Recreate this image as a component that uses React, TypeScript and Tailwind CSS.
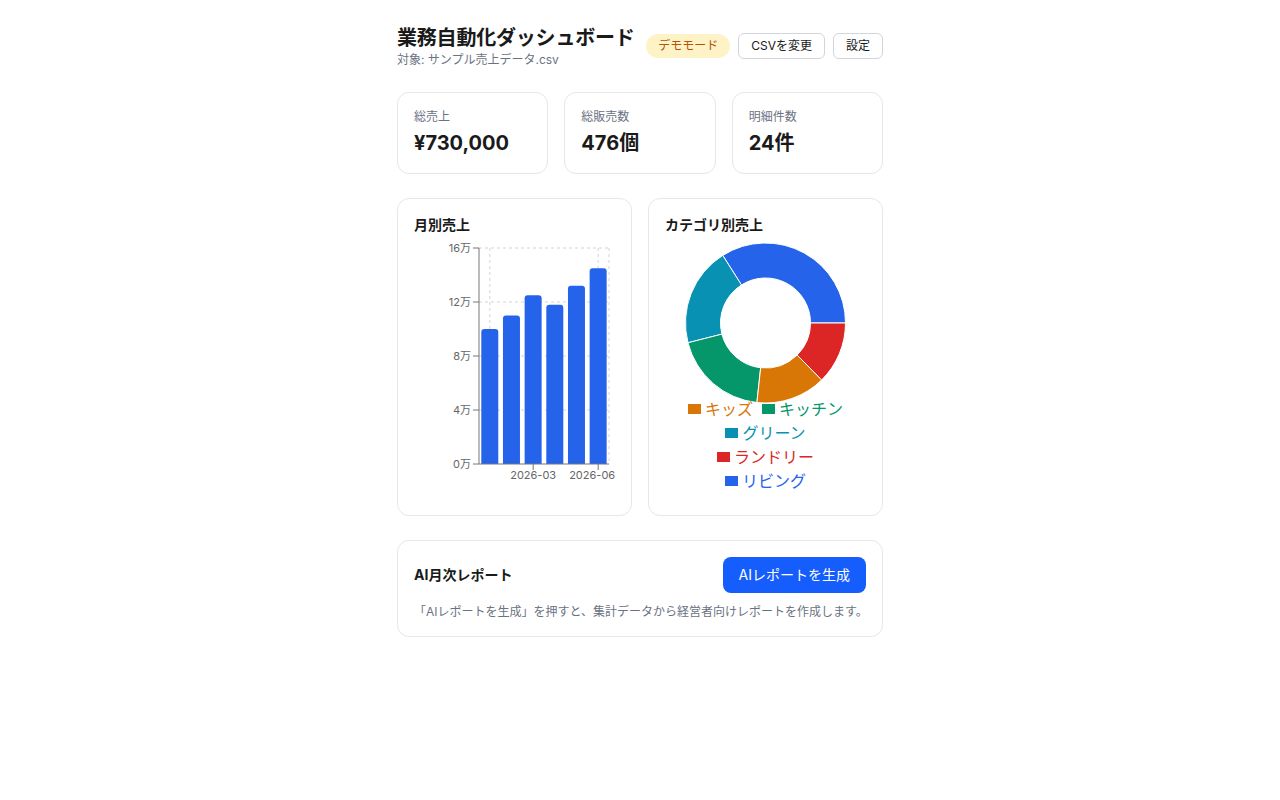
import React from "react";

const font = { fontFamily: "Inter, 'Noto Sans CJK JP', sans-serif" };

const kpis = [
  { label: "総売上", value: "¥730,000" },
  { label: "総販売数", value: "476個" },
  { label: "明細件数", value: "24件" },
];

const monthly = [100000, 110000, 125000, 118000, 132000, 145000];

const categories = [
  { name: "リビング", value: 248000, color: "#2563eb" },
  { name: "グリーン", value: 146000, color: "#0891b2" },
  { name: "キッチン", value: 141000, color: "#059669" },
  { name: "キッズ", value: 103000, color: "#d97706" },
  { name: "ランドリー", value: 92000, color: "#dc2626" },
];

function BarChart() {
  // plot area in svg coords
  const left = 65;
  const right = 195;
  const top = 9;
  const bottom = 225;
  const max = 160000;
  const step = (right - left) / monthly.length;
  const y = (v: number) => bottom - (v / max) * (bottom - top);
  const ticks = [0, 40000, 80000, 120000, 160000];

  return (
    <svg width="201" height="260" className="overflow-visible">
      {/* grid */}
      {ticks.slice(1).map((t) => (
        <line key={t} x1={left} x2={right} y1={y(t)} y2={y(t)} stroke="#d4d4d4" strokeDasharray="3 3" />
      ))}
      {[left + step / 2, left + step * 5.5, right].map((x) => (
        <line key={x} x1={x} x2={x} y1={top} y2={bottom} stroke="#d4d4d4" strokeDasharray="3 3" />
      ))}
      {/* bars */}
      {monthly.map((v, i) => {
        const bx = left + i * step + 2.3;
        const bw = 17;
        const by = y(v);
        const r = 3;
        return (
          <path
            key={i}
            d={`M${bx} ${bottom} V${by + r} Q${bx} ${by} ${bx + r} ${by} H${bx + bw - r} Q${bx + bw} ${by} ${bx + bw} ${by + r} V${bottom} Z`}
            fill="#2563eb"
          />
        );
      })}
      {/* axes */}
      <line x1={left} x2={left} y1={top} y2={bottom} stroke="#777" />
      <line x1={left} x2={right} y1={bottom} y2={bottom} stroke="#777" />
      {ticks.map((t) => (
        <g key={t}>
          <line x1={left - 6} x2={left} y1={y(t)} y2={y(t)} stroke="#777" />
          <text x={left - 8} y={y(t) + 4} textAnchor="end" fontSize="11" fill="#666" style={font}>
            {t / 10000}万
          </text>
        </g>
      ))}
      {[
        { i: 2, label: "2026-03", lx: 0 },
        { i: 5, label: "2026-06", lx: -6 },
      ].map(({ i, label, lx }) => {
        const cx = left + step * (i + 0.5);
        return (
          <g key={label}>
            <line x1={cx} x2={cx} y1={bottom} y2={bottom + 6} stroke="#777" />
            <text x={cx + lx} y={bottom + 15} textAnchor="middle" fontSize="11" fill="#666" style={font}>
              {label}
            </text>
          </g>
        );
      })}
    </svg>
  );
}

function Donut() {
  const cx = 100.5;
  const cy = 82;
  const ro = 80;
  const ri = 45;
  const total = categories.reduce((s, c) => s + c.value, 0);
  const pt = (r: number, a: number) => {
    const rad = (a * Math.PI) / 180;
    return `${cx + r * Math.cos(rad)} ${cy - r * Math.sin(rad)}`;
  };
  let start = 0;
  return (
    <svg width="201" height="156" className="overflow-visible">
      {categories.map((c) => {
        const sweep = (c.value / total) * 360;
        const end = start + sweep;
        const large = sweep > 180 ? 1 : 0;
        const d = `M${pt(ro, start)} A${ro} ${ro} 0 ${large} 0 ${pt(ro, end)} L${pt(ri, end)} A${ri} ${ri} 0 ${large} 1 ${pt(ri, start)} Z`;
        start = end;
        return <path key={c.name} d={d} fill={c.color} stroke="#fff" strokeWidth="1" />;
      })}
    </svg>
  );
}

function LegendItem({ name }: { name: string }) {
  const c = categories.find((x) => x.name === name)!;
  return (
    <span className="flex items-center gap-1">
      <span className="inline-block h-[10px] w-[13px]" style={{ backgroundColor: c.color }} />
      <span className="text-base leading-6" style={{ color: c.color }}>
        {name}
      </span>
    </span>
  );
}

export default function App() {
  return (
    <div className="min-h-screen bg-white text-[#1a1a1a]" style={font}>
      <div className="mx-auto w-[486px] pt-6 pb-10">
        <div className="flex items-center justify-between">
          <div>
            <h1 className="text-xl leading-7 font-bold tracking-[-0.2px]">業務自動化ダッシュボード</h1>
            <p className="text-xs leading-4 text-gray-500">対象: サンプル売上データ.csv</p>
          </div>
          <div className="flex items-center gap-2">
            <span className="rounded-full bg-[#fef3c7] px-3 py-1 text-xs leading-4 text-[#b45309]">デモモード</span>
            <button className="rounded-md border border-gray-300 bg-white px-3 py-[4px] text-xs leading-4">CSVを変更</button>
            <button className="rounded-md border border-gray-300 bg-white px-3 py-[4px] text-xs leading-4">設定</button>
          </div>
        </div>

        <div className="mt-6 grid grid-cols-3 gap-4">
          {kpis.map((k) => (
            <div key={k.label} className="rounded-xl border border-gray-200 p-4">
              <div className="text-xs leading-4 text-gray-500">{k.label}</div>
              <div className="mt-1 text-xl leading-7 font-bold">{k.value}</div>
            </div>
          ))}
        </div>

        <div className="mt-6 grid grid-cols-2 gap-4">
          <div className="h-[318px] rounded-xl border border-gray-200 p-4">
            <h2 className="text-sm leading-5 font-bold">月別売上</h2>
            <div className="mt-1">
              <BarChart />
            </div>
          </div>
          <div className="h-[318px] rounded-xl border border-gray-200 p-4">
            <h2 className="text-sm leading-5 font-bold">カテゴリ別売上</h2>
            <div className="mt-[6px]">
              <Donut />
            </div>
            <div className="flex flex-col items-center">
              <div className="flex gap-[9px]">
                <LegendItem name="キッズ" />
                <LegendItem name="キッチン" />
              </div>
              <LegendItem name="グリーン" />
              <LegendItem name="ランドリー" />
              <LegendItem name="リビング" />
            </div>
          </div>
        </div>

        <div className="mt-6 rounded-xl border border-gray-200 p-4">
          <div className="flex items-center justify-between">
            <h2 className="text-sm leading-5 font-bold">AI月次レポート</h2>
            <button className="h-9 rounded-lg bg-[#155dfc] px-4 text-sm text-white">AIレポートを生成</button>
          </div>
          <p className="mt-[11px] whitespace-nowrap text-xs leading-4 text-gray-500">
            「AIレポートを生成」を押すと、集計データから経営者向けレポートを作成します。
          </p>
        </div>
      </div>
    </div>
  );
}
